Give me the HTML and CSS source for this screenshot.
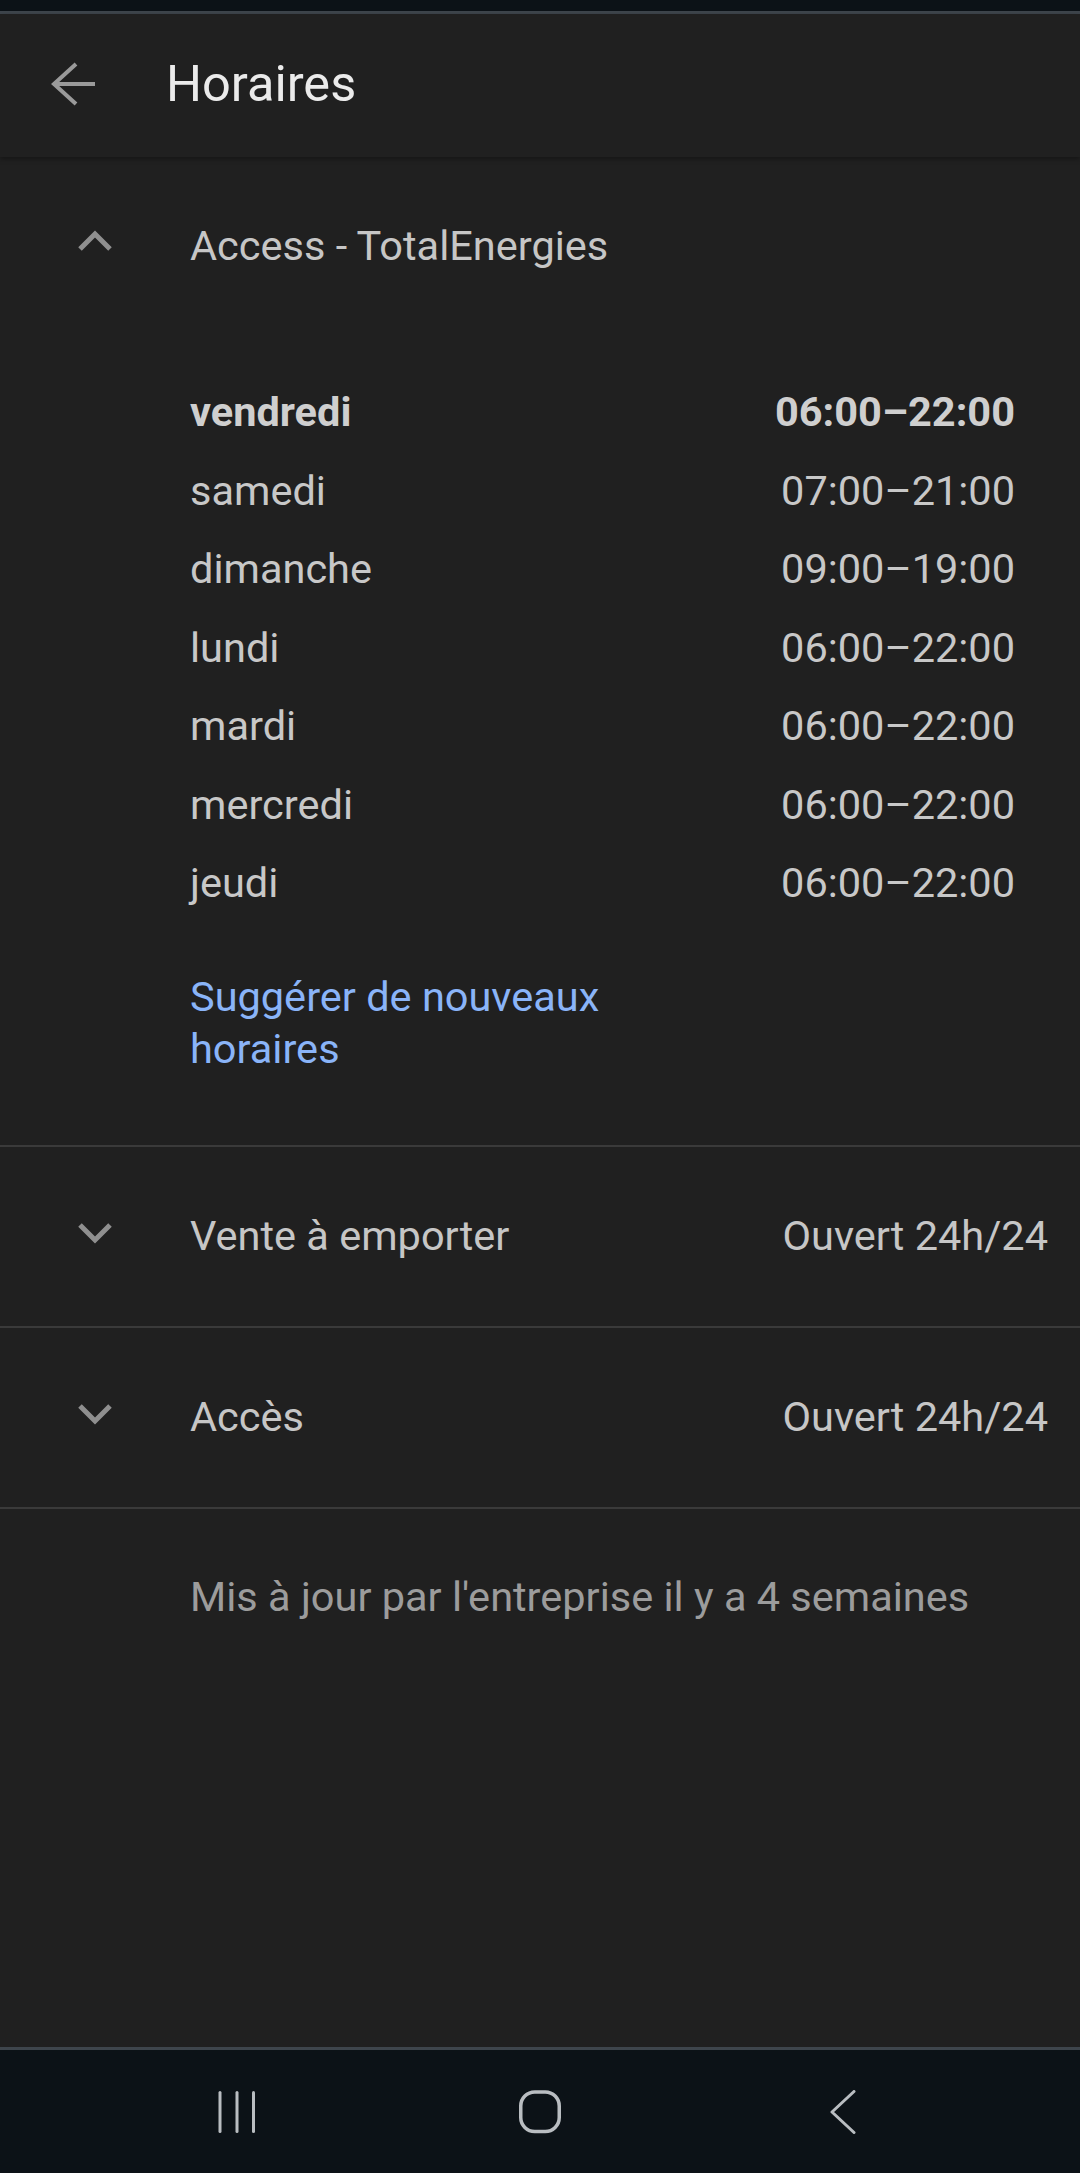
FILE: index.html
```html
<!DOCTYPE html>
<html lang="fr">
<head>
<meta charset="utf-8">
<title>Horaires</title>
<link rel="stylesheet" href="styles.css">
</head>
<body>
<div class="statusbar"></div>
<header class="appbar">
  <svg class="back" width="48" height="48" viewBox="0 0 48 48" aria-hidden="true">
    <polyline points="26,4 4,24 26,44" fill="none" stroke="currentColor" stroke-width="4"/>
    <line x1="5" y1="24" x2="45" y2="24" stroke="currentColor" stroke-width="4"/>
  </svg>
  <h1 class="title">Horaires</h1>
</header>
<main class="content">
  <section class="group group-open">
    <div class="group-head">
      <span class="chev-cell">
        <svg class="chev chev-up" width="40" height="28" viewBox="0 0 40 28" aria-hidden="true">
          <polyline points="5,22 20,7 35,22" fill="none" stroke="currentColor" stroke-width="5"/>
        </svg>
      </span>
      <span class="group-title">Access - TotalEnergies</span>
    </div>
    <ul class="days">
      <li class="day today"><span>vendredi</span><span>06:00–22:00</span></li>
      <li class="day"><span>samedi</span><span>07:00–21:00</span></li>
      <li class="day"><span>dimanche</span><span>09:00–19:00</span></li>
      <li class="day"><span>lundi</span><span>06:00–22:00</span></li>
      <li class="day"><span>mardi</span><span>06:00–22:00</span></li>
      <li class="day"><span>mercredi</span><span>06:00–22:00</span></li>
      <li class="day"><span>jeudi</span><span>06:00–22:00</span></li>
    </ul>
    <a class="suggest" href="#">Suggérer de nouveaux horaires</a>
  </section>
  <section class="group group-row">
    <span class="chev-cell">
      <svg class="chev chev-down" width="40" height="28" viewBox="0 0 40 28" aria-hidden="true">
        <polyline points="5,6 20,21 35,6" fill="none" stroke="currentColor" stroke-width="5"/>
      </svg>
    </span>
    <span class="group-title">Vente à emporter</span>
    <span class="group-status">Ouvert 24h/24</span>
  </section>
  <section class="group group-row">
    <span class="chev-cell">
      <svg class="chev chev-down" width="40" height="28" viewBox="0 0 40 28" aria-hidden="true">
        <polyline points="5,6 20,21 35,6" fill="none" stroke="currentColor" stroke-width="5"/>
      </svg>
    </span>
    <span class="group-title">Accès</span>
    <span class="group-status">Ouvert 24h/24</span>
  </section>
  <p class="updated">Mis à jour par l'entreprise il y a 4 semaines</p>
</main>
<nav class="navbar">
  <div class="nav-cell">
    <svg width="40" height="42" viewBox="0 0 40 42" aria-hidden="true">
      <line x1="3" y1="1.5" x2="3" y2="40.5" stroke="currentColor" stroke-width="3" stroke-linecap="round"/>
      <line x1="20" y1="1.5" x2="20" y2="40.5" stroke="currentColor" stroke-width="3" stroke-linecap="round"/>
      <line x1="36.5" y1="1.5" x2="36.5" y2="40.5" stroke="currentColor" stroke-width="3" stroke-linecap="round"/>
    </svg>
  </div>
  <div class="nav-cell">
    <svg width="44" height="44" viewBox="0 0 44 44" aria-hidden="true">
      <rect x="2.75" y="2" width="38.5" height="39.5" rx="14" ry="14" fill="none" stroke="currentColor" stroke-width="3.5"/>
    </svg>
  </div>
  <div class="nav-cell">
    <svg width="28" height="44" viewBox="0 0 28 44" aria-hidden="true">
      <polyline points="25,1.5 3,22 25,42.5" fill="none" stroke="currentColor" stroke-width="3" stroke-linecap="round" stroke-linejoin="round"/>
    </svg>
  </div>
</nav>
</body>
</html>
```

FILE: styles.css
```css
* { box-sizing: border-box; }

html, body {
  margin: 0;
  padding: 0;
}

body {
  width: 1080px;
  height: 2173px;
  background: #202020;
  font-family: Roboto, "Noto Sans", "Liberation Sans", sans-serif;
  color: #c6c6c6;
  display: flex;
  flex-direction: column;
  overflow: hidden;
}

.statusbar {
  height: 14px;
  background: #0c1217;
  border-bottom: 3px solid #3e454c;
  flex: none;
}

.appbar {
  height: 143px;
  flex: none;
  display: flex;
  align-items: center;
  padding-left: 50px;
  background: #202020;
  box-shadow: 0 2px 5px rgba(0, 0, 0, 0.35);
  position: relative;
  z-index: 1;
}

.back {
  color: #9a9a9a;
  margin-top: -3px;
  flex: none;
}

.title {
  margin: -3px 0 0 68px;
  font-size: 50.5px;
  font-weight: 400;
  line-height: 1;
  color: #ebebeb;
}

.content {
  flex: 1;
}

.group {
  border-bottom: 2px solid #3a3a3a;
}

.group-open {
  padding: 63px 0 70px;
}

.group-head {
  display: flex;
  align-items: flex-start;
}

.chev-cell {
  width: 190px;
  flex: none;
  display: flex;
  justify-content: center;
}

.chev {
  color: #8f8f8f;
  display: block;
}

.chev-up {
  margin-top: 7px;
}

.chev-down {
  margin-top: 9px;
}

.group-title {
  font-size: 41.5px;
  line-height: 52px;
  color: #c6c6c6;
}

.days {
  list-style: none;
  margin: 101px 0 0 190px;
  padding: 0 65px 0 0;
}

.day {
  display: flex;
  justify-content: space-between;
  font-size: 41.5px;
  line-height: 78.5px;
  color: #c8c8c8;
}

.day.today {
  font-weight: 700;
  color: #cfcfcf;
}

.suggest {
  display: block;
  width: 460px;
  margin: 48px 0 0 190px;
  font-size: 41.5px;
  line-height: 52px;
  color: #8ab4f8;
  text-decoration: none;
}

.group-row {
  display: flex;
  align-items: flex-start;
  padding: 63px 32px 64px 0;
}

.group-row .group-title {
  flex: 1;
}

.group-status {
  font-size: 41.5px;
  line-height: 52px;
  color: #c6c6c6;
}

.updated {
  margin: 0;
  padding: 62px 0 0 190px;
  font-size: 41.5px;
  line-height: 52px;
  color: #9c9c9c;
}

.navbar {
  flex: none;
  height: 126px;
  background: #0c1217;
  border-top: 3px solid #3e454c;
  display: flex;
  justify-content: center;
  align-items: center;
  color: #b9bdc1;
}

.nav-cell {
  width: 303px;
  display: flex;
  justify-content: center;
  align-items: center;
}

.nav-cell svg {
  display: block;
}
```
